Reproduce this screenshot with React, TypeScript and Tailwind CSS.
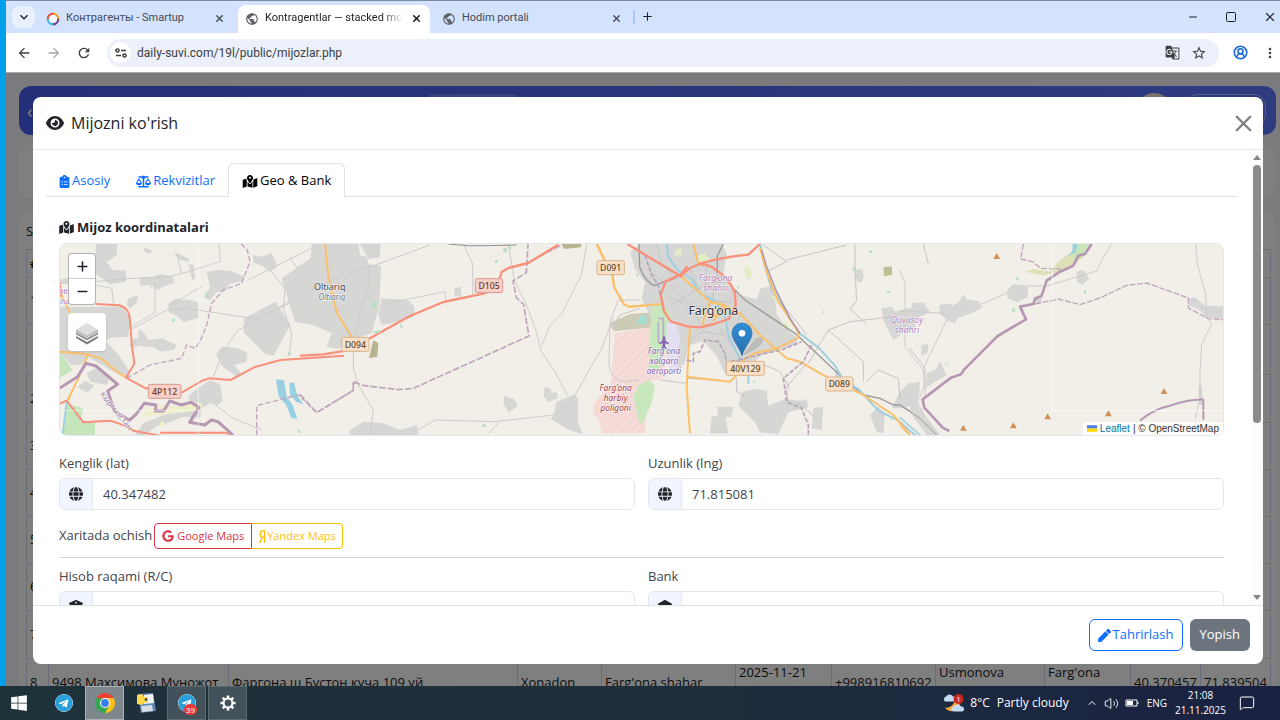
import React, { useState } from 'react';
import {
  FaBuildingColumns,
  FaClipboardList,
  FaEye,
  FaGlobe,
  FaGoogle,
  FaLandmark,
  FaMapLocationDot,
  FaScaleBalanced,
  FaYandex,
} from 'react-icons/fa6';
import { FaPen, FaTelegram, FaWindows } from 'react-icons/fa';
import {
  MdArrowBack,
  MdArrowForward,
  MdGTranslate,
  MdKeyboardArrowDown,
  MdMoreVert,
  MdPublic,
  MdRefresh,
  MdStarBorder,
} from 'react-icons/md';
import { ChevronUp, CircleUserRound, MessageSquare, Minus, Plus, Square, Volume2, X } from 'lucide-react';

const rows = [
  { no: '1', height: 'h-[47px]' },
  { no: '', height: 'h-[50px]' },
  { no: '2', height: 'h-[48px]' },
  { no: '3', height: 'h-[47px]' },
  { no: '4', height: 'h-[47px]' },
  { no: '5', height: 'h-[47px]' },
  { no: '6', height: 'h-[47px]' },
  { no: '7', height: 'h-[48px]' },
];

const lastRow = [
  { text: '8', top: false },
  { text: '9498 Махсимова Муножот', top: false },
  { text: 'Фаргона ш Бустон куча 109 уй', top: false },
  { text: 'Xonadon', top: false },
  { text: "Farg'ona shahar", top: false },
  { text: '2025-11-21', top: true },
  { text: '+998916810692', top: false },
  { text: 'Usmonova', top: true },
  { text: "Farg'ona", top: true },
  { text: '40.370457', top: false },
  { text: '71.839504', top: false },
];

const tabs = [
  { id: 'asosiy', label: 'Asosiy', icon: <FaClipboardList className="w-[11px]" /> },
  { id: 'rekvizitlar', label: 'Rekvizitlar', icon: <FaScaleBalanced className="w-[15px]" /> },
  { id: 'geo', label: 'Geo & Bank', icon: <FaMapLocationDot className="w-4" /> },
];

function RingLogo() {
  return (
    <svg viewBox="0 0 14 14" className="size-[14px]" fill="none" strokeWidth="2.4">
      <path d="M7 1.8A5.2 5.2 0 0 1 12.2 7" stroke="#f0a030" />
      <path d="M12.2 7A5.2 5.2 0 0 1 7 12.2" stroke="#7b3fa0" />
      <path d="M7 12.2A5.2 5.2 0 0 1 1.8 7" stroke="#4ab6e8" />
      <path d="M1.8 7A5.2 5.2 0 0 1 7 1.8" stroke="#e8584a" />
      <circle cx="7" cy="7" r="4" fill="#fff" stroke="none" />
    </svg>
  );
}

function BrowserChrome() {
  return (
    <header className="font-['Roboto','Noto_Sans',sans-serif] text-[#1f1f1f]">
      <div className="flex h-[33px] items-end border-t border-[#7f8ba5] bg-[#d3e3fd] text-[11px]">
        <button aria-label="Search tabs" className="mb-[5px] ml-[6px] flex h-[22px] w-[23px] items-center justify-center rounded-lg bg-[#e9f1fe]">
          <MdKeyboardArrowDown className="size-4" />
        </button>
        <div className="flex h-[28px] w-[203px] items-center rounded-br-xl pb-px pl-[11px] pr-[13px] text-[#454a54]">
          <RingLogo />
          <span className="ml-[6px] flex-1 truncate">Контрагенты - Smartup</span>
          <button aria-label="Close tab"><X className="size-[11px]" strokeWidth={3} /></button>
        </div>
        <div className="flex h-[28px] w-[192px] items-center rounded-t-lg bg-white pb-px pl-[7px] pr-2">
          <MdPublic className="size-[14px] shrink-0 text-[#5f6368]" />
          <span className="ml-[6px] flex-1 overflow-hidden whitespace-nowrap [mask-image:linear-gradient(to_right,black_85%,transparent)]">
            Kontragentlar — stacked moda
          </span>
          <button aria-label="Close tab" className="ml-2"><X className="size-[11px]" strokeWidth={3.5} /></button>
        </div>
        <div className="flex h-[28px] w-[203px] items-center pb-px pl-[12px] pr-[11px] text-[#454a54]">
          <MdPublic className="size-[14px] text-[#5f6368]" />
          <span className="ml-[6px] flex-1">Hodim portali</span>
          <button aria-label="Close tab"><X className="size-[11px]" strokeWidth={3} /></button>
        </div>
        <span className="mb-[9px] h-[14px] w-[2px] rounded bg-[#a8c7fa]" />
        <button aria-label="New tab" className="mb-[10px] ml-[6px]"><Plus className="size-[13px]" /></button>
        <div className="ml-auto flex h-[32px] items-center gap-[26px] pr-[3px]">
          <button aria-label="Minimize"><Minus className="size-[12px]" strokeWidth={2} /></button>
          <button aria-label="Maximize"><Square className="size-[12px]" strokeWidth={2} /></button>
          <button aria-label="Close"><X className="size-[14px]" strokeWidth={2} /></button>
        </div>
      </div>
      <div className="flex h-[40px] items-center border-b border-[#a9abaf] bg-white pl-[10px] pr-[2px]">
        <button aria-label="Back"><MdArrowBack className="size-4 text-[#3c4043]" /></button>
        <button aria-label="Forward" className="ml-[14px]"><MdArrowForward className="size-4 text-[#a5a7aa]" /></button>
        <button aria-label="Reload" className="ml-[14px]"><MdRefresh className="size-4 text-[#3c4043]" /></button>
        <div className="ml-[15px] flex h-[28px] flex-1 items-center rounded-full bg-[#ebf0fa] pl-[3px] pr-[12px]">
          <button aria-label="Site information" className="flex size-[21px] items-center justify-center rounded-full bg-white">
            <svg viewBox="0 0 12 10" className="h-[10px] w-3" fill="none" stroke="#3c4043" strokeWidth="1.5">
              <circle cx="2.5" cy="2.5" r="1.6" />
              <path d="M6 2.5h5M1 7.5h5" />
              <circle cx="9.5" cy="7.5" r="1.6" />
            </svg>
          </button>
          <input
            aria-label="Address"
            readOnly
            value="daily-suvi.com/19l/public/mijozlar.php"
            className="ml-[6px] min-w-0 flex-1 bg-transparent text-[12px] text-[#3c4043] outline-none"
          />
          <button aria-label="Translate"><MdGTranslate className="size-[15px] text-[#3c4043]" /></button>
          <button aria-label="Bookmark" className="ml-[11px]"><MdStarBorder className="size-4 text-[#3c4043]" /></button>
        </div>
        <button aria-label="Profile" className="ml-[14px]"><CircleUserRound className="size-[15px] text-[#1a65e0]" strokeWidth={2.5} /></button>
        <button aria-label="Menu" className="ml-[14px]"><MdMoreVert className="size-4 text-[#3c4043]" /></button>
      </div>
    </header>
  );
}

function ClientsPage() {
  return (
    <div className="h-full overflow-hidden bg-[#f6f7fb] pl-[13px] pr-1 pt-[13px] text-[13px] text-[#15171a]">
      <div className="flex h-[49px] items-center rounded-xl bg-linear-to-r from-[#4660f2] to-[#5c76ff] pl-2 pr-[10px] text-white">
        <span className="text-lg">‹</span>
        <span className="ml-[395px] h-[33px] w-[92px] rounded-md bg-white/20" />
        <span className="ml-auto size-[36px] rounded-full bg-[#efe9e0]" />
        <span className="ml-[14px] h-[33px] w-[80px] rounded-xl border border-white/50" />
      </div>
      <div className="mt-[10px] h-[53px] rounded-xl bg-white" />
      <div className="mt-[13px] rounded-xl bg-white px-[7px]">
        <p className="h-[38px] pt-[10px] leading-5">Soni</p>
        <table className="w-full table-fixed border-collapse whitespace-nowrap">
          <colgroup>
            <col className="w-[22px]" />
            <col className="w-[180px]" />
            <col className="w-[289px]" />
            <col className="w-[84px]" />
            <col className="w-[134px]" />
            <col className="w-[96px]" />
            <col className="w-[104px]" />
            <col className="w-[109px]" />
            <col className="w-[86px]" />
            <col className="w-[70px]" />
            <col className="w-[70px]" />
          </colgroup>
          <thead>
            <tr className="h-[28px]">
              {lastRow.map((_, i) => (
                <th key={i} className="border border-[#d5d9ee] px-[3px] text-left">{i === 0 ? '#' : ''}</th>
              ))}
            </tr>
          </thead>
          <tbody>
            {rows.map((row, r) => (
              <tr key={r} className={row.height}>
                {lastRow.map((_, i) => (
                  <td key={i} className="border border-[#d5d9ee] px-[3px]">{i === 0 ? row.no : ''}</td>
                ))}
              </tr>
            ))}
            <tr className="h-[48px]">
              {lastRow.map((cell) => (
                <td
                  key={cell.text}
                  className={`border border-[#d5d9ee] px-[3px] align-top leading-5 ${cell.top ? 'pt-[3px]' : 'pt-[13px]'}`}
                >
                  {cell.text}
                </td>
              ))}
            </tr>
          </tbody>
        </table>
      </div>
    </div>
  );
}

function RoadSign({ x, y, w, label, primary }: { x: number; y: number; w: number; label: string; primary?: boolean }) {
  return (
    <g>
      <rect
        x={x - w / 2}
        y={y - 21}
        width={w}
        height="42"
        rx="5"
        fill={primary ? '#f6cfc6' : '#f8e0c8'}
        stroke={primary ? '#d99b90' : '#d8b48c'}
        strokeWidth="3"
      />
      <text x={x} y={y + 10} textAnchor="middle" fontSize="26" fontWeight="500" fill={primary ? '#6b3a32' : '#5e4a2c'}>
        {label}
      </text>
    </g>
  );
}

function Peak({ x, y }: { x: number; y: number }) {
  return <path d={`M${x} ${y - 9}l10 18h-20z`} fill="#d08f55" />;
}

// One map unit is a third of a css pixel.
function MapCanvas() {
  return (
    <svg
      viewBox="0 0 3495 573"
      preserveAspectRatio="xMidYMid slice"
      className="h-full w-full bg-[#f2efe9] font-['Noto_Sans',sans-serif]"
      role="img"
      aria-label="Xarita"
      strokeLinejoin="round"
    >
      <defs>
        <pattern id="hatch" width="18" height="18" patternUnits="userSpaceOnUse" patternTransform="rotate(45)">
          <rect width="18" height="18" fill="#f5dcd8" />
          <path d="M0 0v18" stroke="#f3d1cd" strokeWidth="6" />
        </pattern>
        <linearGradient id="pin" x1="0" x2="0" y1="0" y2="1">
          <stop offset="0" stopColor="#2f8fd6" />
          <stop offset="1" stopColor="#2a6fab" />
        </linearGradient>
      </defs>

      {/* west */}
      <g transform="translate(-177 -312)" fill="none">
        <g fill="#d6d6d5">
          <path d="M287 312h65l-2 33-30 22 18 23 40 2v33l-48 8-43-32zM178 420l30-8v20h-30zM178 500h190l22 35-5 55-55 3-12 10 40 45 30 45-3 25-60-32-60-35-25 25-30-3-32-38z" />
          <path d="M420 415l40-5 20-8 40 8 2 20-30 8-18 12-22-15-32 2zM385 475l30-10-5 25-22 15-8-12zM505 492l20-15 50 3 20 8v45l-45 14-18-18-26-12zM388 615l15-22 10 5 5-30 15 10 12 22 40-5 45 20-8 15-40 5-22-13-40-5-25 8z" />
          <path d="M620 395l40-5 35 3 40 18-10 12-38 10-12 20-25 3-20 25-18-10 18-30zM758 345l30 5 25-12 12 20 5 22-20 15-28-20-20-5zM565 372l15 3 5 40-8 5zM520 335l25 10 22 12-2 8-25-5zM430 322l25 8-3 12-18-6z" />
          <path d="M732 535l95-50 44 70-50 92-25-5-65-65zM665 620l50 5 28 15-5 25-35 10 20 25-12 10-45-32-18-35zM565 768l30-25 35-22 30 12 8 50-15 12-25-5-15 12-40-5zM260 700l25-15 45 25-10 25-50-10zM232 740l25-18 25 15-20 22zM430 850l60-25 70-20 45 5-5 25-50-5-50 20-30 8-35 27h-30z" />
        </g>
        <path d="M430 810l60-15 60 5 50-15 10 20-50 10-60 8-70 8zM478 850l12-8 5 15-10 8z" fill="#eeeecb" />
        <path d="M178 635l40 55-40 25zM200 792l50 12-10 40 45 5v36H185z" fill="#c5e6bd" />
        <path d="M828 718l24 2 8 50 18 25 14 42-18-3-16-40-22-25zM868 728h14l10 40 18 25-22-8-18-20z" fill="#98cfe2" />
        <g stroke="#cdcbcc" strokeWidth="3">
          <path d="M285 425l80-8 145-8 60-15 92-30-5-52M465 430v88l-110 65M510 495l95-55M390 570l110-60 60-5 230 35M290 435l45 10 8 60M545 400l-15-60" />
          <path d="M640 710l30-75 40-60 60-40 120-55 60-30M745 420l190-95M810 390l45 55-5 60 25 75-8 70M870 350l25 40" />
          <path d="M640 790l60 45 85 35" />
        </g>
        <path d="M380 715l70-40 95-20 15-40 25 10 15-20 20-50 15-65 35-40 55-20 25-65-8-35-35-35" stroke="#bfa6bc" strokeWidth="4" strokeDasharray="16 7" />
        <path d="M770 885v-88l125-32 55 52 110-65v-25l12 8" stroke="#bfa6bc" strokeWidth="4" strokeDasharray="16 7" />
        <path d="M178 440l8 30 20 40 30 60M178 635l85 8 40 12 50 42 25 15M265 640l-30 75-32 65 8-10" stroke="#fbc069" strokeWidth="6" />
        <path d="M200 780l-12 105" stroke="#98cfe2" strokeWidth="5" />
        <path d="M178 425l6 45M287 492l70 4q30 5 33 45l5 70 8 60-25 42 55 30 30 8M545 758l60-35 22-8 65 5 70-38 80-22 190-13M178 792l22-10 50 65 80-5q50 15 70 30l80 15M480 878h200l8 8" stroke="#f8907a" strokeWidth="6" />
        <path d="M178 745l55-35 25-40 30 8 65 55-30 20 20 60 45 28 20-18 25-33 35 5-2 18h25l18-30 35 12 28-8 25 15-28 45 45 8 20-15 20 5 45 40" stroke="#b698b3" strokeWidth="9" />
        <path d="M595 312v573M178 812h430" stroke="#fff" strokeOpacity=".5" strokeWidth="3" />
        <g fill="#b5dfc1">
          <path d="M617 455l8 8-3 10-6-3zM515 537l10-2v10h-8zM402 605l5-3v10zM948 515l8-6v12zM866 637h6v8h-8zM890 865l12 8-5 10zM450 440l6-2v8z" />
        </g>
      </g>

      {/* Oltiariq and the plain east of it */}
      <g transform="translate(723 -27)" fill="none">
        <g fill="#d6d6d5">
          <path d="M35 27l-3 43-87 60 40 130 55 10 55 25-15 40 35 7 35-27 65-20 23-80 5-122-38-5-5-23-20-5-5-33z" />
          <path d="M180 27h62l-3 40-34 5zM245 190l80 5 18 20-3 30-45 15-50 10-10-30zM462 160l20-5 3 30-20-2zM735 455l15 5 5 15 15-5 3 20-28 12-15-20zM770 500l50-20 15 8-2 70 15 40-45-15-50-30 8-15zM612 482l30 10 12 20-28 20-15-25zM150 585l40-25 60 5 50 20 50-15 5 30H150z" />
        </g>
        <path d="M220 315l15 10-3 40-25 5 8-35zM785 27h60l-3 10-50 5z" fill="#b7b48f" />
        <path d="M928 265l62-28 100-8 0 45-148 15z" fill="#cccbb5" />
        <path d="M945 295l150-25v160l-50 10-10 155H905l-8-40-20-20 5-30 50-60 5-65z" fill="url(#hatch)" />
        <g stroke="#cdcbcc" strokeWidth="3">
          <path d="M-60 215l120-65 120-45 60-20 150-55M205 90l5 40-30 110-20 70v90l15 50 45 75-10 75M105 235l40-30M260 205l175-35 3 25M345 590l60-35 180 5 175-20 60-35M490 27l28 60v95M625 27l18 110 35 70 30 80 15 60 40 60 40 75M860 27l-15 90-60 120-35 35-25 60M565 595l35-35M940 250l-35 90-85 150" />
          <path d="M1020 195h-65l-25 65-3 130q5 45 45 50l45-5" />
        </g>
        <path d="M445 27q60 8 120 5l85-2" stroke="#8f8f8f" strokeWidth="3" />
        <path d="M0 478l50 55 110-67v-28l25 13 110 13 45-4 347-157-8-45-8-50-22-20-10-50 40-25 5-86M780 32l-95 50" stroke="#bfa6bc" strokeWidth="5" strokeDasharray="20 6" />
        <path d="M75 27l10 100 25 105 45 75 10 40M890 27l30 65 18 30 5 35 30 52 15 6 90-8" stroke="#fbc069" strokeWidth="6" />
        <path d="M0 362l70-4 90-15M200 315l130-72 100-42 120-25 40-15 15-50 20-12 60-15 90-55" stroke="#f8907a" strokeWidth="7" />
        <path d="M215 205l15-5-3 20-12 2zM300 262l10 15-8 3zM610 40l10-2v14h-10zM625 32l10 4-5 10zM218 290l20-5 3 10h-20zM585 75h8v8h-8zM548 568h10v8h-10zM45 230l8-5v12z" fill="#b5dfc1" />
      </g>

      {/* Fargona city */}
      <g transform="translate(1593 -27)" fill="none">
        <g fill="#d6d6d5">
          <path d="M150 27h245l15 30-10 60 40 60 55 15 40 55 55 45 30 20v15l-110 35-40 50-65 5-25-55-40-45-45 15-10 50-15 20-30-10-10-110-45-30-30-60 10-50-30-40-15-50z" />
          <path d="M512 160l28-5 15 30 5 55 40 50 25 20-20 20-50-40-65-75zM795 105l22-2 5 25-10 15-12-5zM800 130h8v8zM875 220l30-5 10 15 40-10 50-10 15 20-40 20-5 30-30 10-35 25-15-30-15-30zM455 470l40-8 35 5 5 45 50-20 45 5 20-5 5 25-60 15-30 65-55-5-15-30-50-50zM365 545l40-5 10 55h-55zM380 515h50l-5 30-40 5zM670 520l30-5-5 70-30-5zM905 520l25-50 30-30 15 30-5 40-35 10zM840 540l25-25 20 20-5 60-20-5zM735 405l20 10-5 20-15-5z" />
        </g>
        <path d="M187 213l32-5 20 30 20 45-25 15-8 50-20 60-30-5 3-90zM145 450l30-15 20 15-10 55-30 65-10-15-15-70z" fill="#c9e7bd" />
        <path d="M230 260l25-5 15 50-10 110-20 5-10-60z" fill="#e4dff0" />
        <path d="M255 45l20-5v20l-20 5zM325 60l20-5 15 20-15 10-20-5zM460 100l15-10 12 30-15 15zM545 185l10-5 10 30zM575 265l15-5 8 15-18 5zM335 160l10 5-8 15z" fill="#e2edc5" />
        <path d="M880 97l25-3 2 25-25 5z" fill="#bfbd94" />
        <g stroke="#c6c4c5" strokeWidth="3">
          <path d="M225 180l55 25 45 50 10 20M240 150l60 60 60 10M245 210l50-30 60-35 60-5M300 100l20 50 45 45 60 10M200 27l15 60 40 40M350 95l-5 70M380 130l-20 85M180 110l40 30M390 280l40 60M300 310l40-20 60 10M450 240l-20 60" />
          <path d="M520 30l70 50-60 30 15 60 75 90 30 40M590 75l180-45M795 27v80l5 90-20 25 50 45M715 285l65-25 130-15M715 285l-60 100M715 285l105 95v60M650 385l-60 70 5 60M830 440l35-35 60 25 5 60M960 340l45 60 0 90M1000 27l15 60M290 430l80 5M210 435l80 10M620 500l60 50M500 380l70 30 30 50M440 430l0 40 25 15M150 220l-60 20-25 40" />
        </g>
        <path d="M147 27l2 70q15 40 42 55l70-25M400 27l-18 35v70M435 165l30 30 150 100 60 55 95 90 50 40 50 10 40 20 20 0 40 25 50 40" stroke="#999" strokeWidth="4" />
        <path d="M230 27l5 40 30 40 40 25 25 45 45 20 30 45 10 60 35 70 25 45v30M510 27l15 70 20 60 40 70 40 65 60 45 50 55 25 45 45 25 60 65 60 30 70 60 25 40" stroke="#9ecfdf" strokeWidth="6" />
        <g stroke="#fbc069" strokeWidth="6">
          <path d="M22 27l30 65 15 30 5 35 30 52 15 6 100-8M310 27l15 60M275 125l85 75 40 10 50 25 60 65 80 70 40 10 60 35 60 30 70 35 90 60 50 60" />
          <path d="M510 40l20 70 35 90 40 60 22 35-5 15-60 30-70 15-40 25M360 200l-20 55 0 20M400 208l-30 50M355 240l35 3M360 200l40 10 5 25M300 275l-5 80-5 100 10 140M290 425l130 15 20-20" />
        </g>
        <path d="M112 27l160 97 28-25 30-12q35 3 50 20 35 20 55 65l2 40-15 25-5 15-45 15-40 10-40-3-50-15-20-30-10-50 15-40 45-20 20-25M325 87q70-20 150-28l35-32" stroke="#f8907a" strokeWidth="7" />
        <path d="M165 60l20 60 20 30 5 30M290 375l20 5v-25l20-5 15-35 40 5 20 35 5 30 25-10 35 15M445 375l80-20 50-10 60-25M665 330l-25 50-60 50 10 70 45 20 20 50v40" stroke="#b9a1b8" strokeWidth="5" strokeDasharray="14 5" />
        <path d="M515 45l15 50 30 75 40 80 30 45" stroke="#a58fae" strokeWidth="4" />
        <path d="M150 242l20 0v25h-30z" fill="#a5ded2" />
        <path d="M205 250h15v95M205 260v65" stroke="#b9adc9" strokeWidth="5" />
        <path d="M788 97h10v12h-10zM838 46h8v8h-8zM890 168h10v5h-10zM700 225l6 10h-8zM185 175l8 6-6 4zM138 115l8 5-8 6zM440 150l8 5-4 8zM488 435l8 3-3 8zM900 545l6 5-4 8z" fill="#b5dfc1" />
      </g>

      {/* eastern border */}
      <g transform="translate(2523 -312)" fill="none">
        <g fill="#d6d6d5">
          <path d="M35 488h40v38H38zM118 495l30-5 10 8 20-15 12-20 10 15 35 5 12 20-40 20-35 12-5 15-25-8-22-20zM322 450l18-18 45 5-3 35-30 15-30-12zM530 395l20-5 18 25-20 20-18-10zM80 700l25-10 15-25 20 40-50 30-12 8zM35 730l25-5-5 65 20 35 45 60h-40l-50-70zM65 615l20-3-2 25-20 12zM865 475l20-3 30 25 55 2v38l-50-5-25-25-30-10zM400 470l25-5v20l-15 8zM895 740l10-5 5 60h-12z" />
        </g>
        <path d="M375 395l25-8 50 8 30-35 45-28 50-20-25 40-60 45-60 8z" fill="#dde0b4" />
        <path d="M525 312h50l-25 30-30 20z" fill="#c8e6b8" />
        <path d="M518 312h14l-5 25-25 12 15-15z" fill="#98cfe2" />
        <g stroke="#cdcbcc" strokeWidth="3">
          <path d="M0 390l15 40v190l55 70 3 45-15 40M0 512l130 8M245 492l80-35M385 438h55l100-30 50-15 20-40 25-41M140 540l-70 145M887 312l5 60 25 90 3 70 15 20-30 60-5 80v80l-15 65" />
        </g>
        <path d="M370 312l-8 45 35 8 25 20 60 2M405 492l70-15 65 17 60-20 80-38 60-7 125 45v30l60 32 45 3" stroke="#bfa6bc" strokeWidth="4" strokeDasharray="18 5" />
        <path d="M575 312l-20 30-20 5-15 30-40 18-40 27-15 45-20 10-5 15-40 8 18 38-85 50-50 50-50 50-10 15-30 10-85 65 5 25 55 60 20 10" stroke="#b698b3" strokeWidth="8" />
        <path d="M720 842q40-35 90-45 60-20 100-18v60" stroke="#b698b3" strokeWidth="6" />
        <path d="M457 312v500M457 812h513" stroke="#fff" strokeOpacity=".7" strokeWidth="3" />
        <path d="M0 832l60 53" stroke="#9ecfdf" strokeWidth="5" />
        <path d="M0 855l30 30" stroke="#fbc069" strokeWidth="6" />
        <path d="M0 795l60 40 50 50" stroke="#999" strokeWidth="3" />
        <path d="M335 507l10-2v10h-8zM132 668l10 5v6zM552 450h5v12h-5zM348 412h8v7h-8z" fill="#b5dfc1" />
        <Peak x={290} y={348} />
        <Peak x={792} y={753} />
        <Peak x={625} y={820} />
        <Peak x={443} y={829} />
        <Peak x={340} y={856} />
        <Peak x={190} y={863} />
      </g>

      <g textAnchor="middle" stroke="#ffffff" strokeOpacity=".7" strokeWidth="4" paintOrder="stroke">
        <text x="812" y="138" fontSize="27" fill="#444">Oltiariq</text>
        <text x="819" y="169" fontSize="24" fontStyle="italic" fill="#777">Oltiariq</text>
        <text x="1963" y="214" fontSize="37" fill="#333">Farg'ona</text>
        <g fontSize="26" fontStyle="italic" fill="#b083b8">
          <text x="1970" y="111">Farg'ona</text>
          <text x="1970" y="140">shahri</text>
          <text x="2544" y="238">Quvasoy</text>
          <text x="2544" y="267">shahri</text>
        </g>
        <g fontSize="25" fontStyle="italic" fill="#8461b5">
          <text x="1815" y="331">Farg'ona</text>
          <text x="1815" y="361">xalqaro</text>
          <text x="1815" y="390">aeroporti</text>
        </g>
        <g fontSize="25" fontStyle="italic" fill="#a03a42">
          <text x="1670" y="440">Farg'ona</text>
          <text x="1670" y="470">harbiy</text>
          <text x="1670" y="500">poligoni</text>
        </g>
        <text x="18" y="151" fontSize="22" fill="#a273ad">Olto</text>
        <text x="18" y="181" fontSize="22" fill="#a273ad">shar</text>
        <text fontSize="24" fill="#9b7d9c" transform="translate(166 506) rotate(51)">Кыргызстан</text>
      </g>
      <path d="M1815 272l4 10v8l11 7v4l-11-3-1 9 4 4v3l-7-2-7 2v-3l4-4-1-9-11 3v-4l11-7v-8z" fill="#8461b5" />

      <RoadSign x={317} y={442} w={98} label="4P112" primary />
      <RoadSign x={889} y={301} w={82} label="D094" />
      <RoadSign x={1290} y={125} w={82} label="D105" primary />
      <RoadSign x={1655} y={71} w={82} label="D091" />
      <RoadSign x={2059} y={373} w={114} label="40V129" />
      <RoadSign x={2341} y={420} w={82} label="D089" />

      <path d="M2050 335l38-50q22-12 24 3 0 14-30 32z" fill="#000" opacity=".12" />
      <path d="M2049 335c-8-28-30-46-30-68a30 30 0 0 1 60 0c0 22-22 40-30 68z" fill="url(#pin)" stroke="#2567a0" strokeWidth="2" />
      <circle cx="2049" cy="268" r="10" fill="#fff" />
    </svg>
  );
}

function LayersIcon() {
  return (
    <svg viewBox="0 0 26 26" className="size-[26px]">
      <path d="M2 17l11 6 11-6v2l-11 6.500-11-6.500z" fill="#7c7c7c" />
      <path d="M2 13l11 6 11-6v2.500l-11 6-11-6z" fill="#999" />
      <path d="M13 4l11 6.500-11 6-11-6z" fill="#dedede" />
      <path d="M2 10.500l11 6 11-6v2l-11 6-11-6z" fill="#b5b5b5" />
    </svg>
  );
}

function ClientMap() {
  return (
    <div className="relative h-[193px] overflow-hidden rounded-lg border border-[#e3e6ea]">
      <MapCanvas />
      <div className="absolute left-2 top-[9px] w-[28px] overflow-hidden rounded border border-black/30 bg-white">
        <button aria-label="Zoom in" className="flex h-[25px] w-full items-center justify-center border-b border-[#ccc]">
          <Plus className="size-[15px]" strokeWidth={2.5} />
        </button>
        <button aria-label="Zoom out" className="flex h-[25px] w-full items-center justify-center">
          <Minus className="size-[15px]" strokeWidth={2.5} />
        </button>
      </div>
      <button aria-label="Layers" className="absolute left-2 top-[69px] flex size-[38px] items-center justify-center rounded bg-white shadow">
        <LayersIcon />
      </button>
      <div className="absolute bottom-0 right-0 flex items-center bg-white/80 px-1 font-['Liberation_Sans',sans-serif] text-[10px] leading-[13px] text-[#333]">
        <svg viewBox="0 0 12 8" className="mr-[3px] h-[7px] w-[10px]">
          <path fill="#4c7be1" d="M0 0h12v4H0z" />
          <path fill="#ffd500" d="M0 4h12v4H0z" />
        </svg>
        <a href="#leaflet" className="mr-[3px] text-[#0078a8]">Leaflet</a>
        <span>| © OpenStreetMap</span>
      </div>
    </div>
  );
}

function Field({ id, label, value, icon }: { id: string; label: string; value: string; icon: React.ReactNode }) {
  return (
    <div>
      <label htmlFor={id} className="block leading-5 text-[#3f454b]">{label}</label>
      <div className="mt-[5px] flex h-[32px] overflow-hidden rounded-md border border-[#e3e6ea]">
        <span className="flex w-[33px] items-center justify-center border-r border-[#e3e6ea] bg-[#f1f5ff] text-[14px] text-[#212529]">
          {icon}
        </span>
        <input id={id} readOnly defaultValue={value} className="min-w-0 flex-1 px-[10px] pt-px text-[#3f454b] outline-none" />
      </div>
    </div>
  );
}

function ClientModal() {
  const [active, setActive] = useState('geo');

  return (
    <div role="dialog" aria-labelledby="modal-title" className="flex min-h-0 flex-1 flex-col overflow-hidden rounded-lg bg-white text-[13px] text-[#212529]">
      <div className="flex h-[53px] shrink-0 items-center border-b border-[#e9ebee] px-[13px]">
        <FaEye className="size-[18px]" />
        <h5 id="modal-title" className="ml-[7px] text-[16px] font-medium">Mijozni ko'rish</h5>
        <button aria-label="Close" className="-mr-[7px] ml-auto text-[#7f7f7f]"><X className="size-[27px]" strokeWidth={2} /></button>
      </div>

      <div className="flex min-h-0 flex-1">
        <div className="min-w-0 flex-1 overflow-hidden px-[13px] pt-[13px]">
          <div role="tablist" className="flex h-[34px] border-b border-[#dee2e6]">
            {tabs.map((tab) => (
              <button
                key={tab.id}
                role="tab"
                aria-selected={tab.id === active}
                onClick={() => setActive(tab.id)}
                className={
                  tab.id === active
                    ? 'flex h-[34px] items-center gap-[2px] rounded-t-md border border-b-0 border-[#dee2e6] bg-white px-[13px] pt-px text-black'
                    : 'flex h-[34px] items-center gap-[2px] border border-b-0 border-transparent px-[12px] pt-px text-[#0d6efd]'
                }
              >
                {tab.icon}
                {tab.label}
              </button>
            ))}
          </div>

          <div className="px-[13px] pt-5">
            <h6 className="flex items-center gap-[3px] font-bold leading-5">
              <FaMapLocationDot className="w-[15px]" />
              Mijoz koordinatalari
            </h6>
            <div className="mt-[6px]">
              <ClientMap />
            </div>

            <div className="mt-[17px] grid grid-cols-2 gap-x-[13px]">
              <Field id="lat" label="Kenglik (lat)" value="40.347482" icon={<FaGlobe />} />
              <Field id="lng" label="Uzunlik (lng)" value="71.815081" icon={<FaGlobe />} />
            </div>

            <div className="mt-[13px] flex items-center gap-[2px]">
              <span className="text-[#3f454b]">Xaritada ochish</span>
              <div className="flex text-[11px]">
                <a href="#google" className="flex h-[26px] items-center gap-[3px] rounded-l border border-[#dc3545] px-[7px] text-[#dc3545]">
                  <FaGoogle className="size-[12px]" />
                  Google Maps
                </a>
                <a href="#yandex" className="flex h-[26px] items-center gap-px rounded-r border border-l-0 border-[#ffc107] px-[6px] text-[#ffc107]">
                  <FaYandex className="h-[13px] w-2" />
                  Yandex Maps
                </a>
              </div>
            </div>

            <hr className="mb-2 mt-2 border-[#d3d5d7]" />

            <div className="grid grid-cols-2 gap-x-[13px]">
              <Field id="account" label="Hisob raqami (R/C)" value="" icon={<FaBuildingColumns />} />
              <Field id="bank" label="Bank" value="" icon={<FaLandmark />} />
            </div>
          </div>
        </div>

        <div className="flex w-[13px] flex-col items-center bg-[#fcfcfc] py-[5px]">
          <span className="border-x-4 border-b-[5px] border-x-transparent border-b-[#868686]" />
          <span className="mt-[5px] h-[258px] w-2 rounded-full bg-[#8b8b8b]" />
          <span className="mt-auto border-x-4 border-t-[5px] border-x-transparent border-t-[#868686]" />
        </div>
      </div>

      <div className="flex h-[59px] shrink-0 items-center justify-end gap-[7px] border-t border-[#dee2e6] px-[13px]">
        <button className="flex h-[32px] items-center gap-[2px] rounded-md border border-[#0d6efd] px-2 text-[#0d6efd]">
          <FaPen />
          Tahrirlash
        </button>
        <button className="h-[32px] rounded-md bg-[#6c757d] px-[10px] text-white">Yopish</button>
      </div>
    </div>
  );
}

function ChromeLogo() {
  return (
    <svg viewBox="0 0 20 20" className="size-5">
      <path d="M10 10L1.340 5A10 10 0 0 1 18.660 5z" fill="#ea4335" />
      <path d="M10 10l8.660-5A10 10 0 0 1 10 20z" fill="#fbc116" />
      <path d="M10 10v10A10 10 0 0 1 1.340 5z" fill="#34a853" />
      <path d="M10 5h8.660l-4.400 7.500z" fill="#fbc116" />
      <path d="M14.300 12.500L10 20 7 13z" fill="#34a853" />
      <path d="M5.700 12.500L1.340 5 8 5.500z" fill="#34a853" />
      <circle cx="10" cy="10" r="5" fill="#fff" />
      <circle cx="10" cy="10" r="3.900" fill="#3b7ded" />
    </svg>
  );
}

function DiskKeyIcon() {
  return (
    <svg viewBox="0 0 20 20" className="size-5">
      <path d="M2 1l15-1 3 18-15 2z" fill="#5c86b4" />
      <path d="M8 2l9-1 1 9-10 1z" fill="#f4f4f0" />
      <path d="M5 13l11-1 1 6-11 1z" fill="#d7dde3" />
      <path d="M1 2l5-1 2 3h4v5l-4 1-2 2-5-1z" fill="#ffd84a" />
      <circle cx="10" cy="6.500" r="1.300" fill="#333" />
    </svg>
  );
}

function GearIcon() {
  return (
    <svg viewBox="0 0 16 16" className="size-4" fill="none" stroke="#fff">
      <circle cx="8" cy="8" r="4.400" strokeWidth="2" />
      <path
        d="M8 .5v3M8 12.500v3M.5 8h3M12.500 8h3M2.700 2.700l2.100 2.100M11.200 11.200l2.100 2.100M2.700 13.300l2.100-2.100M11.200 4.800l2.100-2.100"
        strokeWidth="2.600"
      />
    </svg>
  );
}

function WeatherIcon() {
  return (
    <svg viewBox="0 0 21 20" className="size-[21px]">
      <path d="M13 3a8 8 0 1 1-11 11c6 1 10-4 11-11z" fill="#f5a63b" />
      <path d="M2 8a3 3 0 0 1 1-5 4 4 0 0 1 7 0 2.500 2.500 0 0 1 1 5z" fill="#c5dcf7" />
      <path d="M11 18a2.500 2.500 0 0 1 0-5 4 4 0 0 1 7 0 2.500 2.500 0 0 1 1 5z" fill="#c5dcf7" />
      <circle cx="15.500" cy="5.500" r="5" fill="#c8281f" />
      <text x="15.500" y="8.300" fontSize="8" textAnchor="middle" fill="#fff">1</text>
    </svg>
  );
}

function Taskbar() {
  const slot = 'flex h-[34px] w-[39px] items-center justify-center';

  return (
    <footer className="flex h-[34px] shrink-0 items-center bg-linear-to-r from-[#1e323a] via-[#1e2f3b] to-[#1a2142] text-[12px] text-white">
      <div className="flex gap-[2px]">
        <button aria-label="Start" className="flex h-[34px] w-[42px] items-center justify-center pr-1">
          <FaWindows className="size-[18px]" />
        </button>
        <button aria-label="Telegram" className={slot}>
          <FaTelegram className="size-[18px] rounded-full bg-white text-[#2b9fd9]" />
        </button>
        <button aria-label="Chrome" className={`${slot} border border-[#a9b1b4] bg-[#7e888c]`}><ChromeLogo /></button>
        <button aria-label="WinSCP" className={slot}><DiskKeyIcon /></button>
        <button aria-label="Telegram chats" className={`${slot} relative border border-[#5d6b70] bg-[#43525a]`}>
          <FaTelegram className="size-[18px] rounded-full bg-white text-[#2b9fd9]" />
          <span className="absolute bottom-1 right-2 rounded-full bg-[#e53b3b] px-[2px] text-[8px] leading-[11px]">39</span>
        </button>
        <button aria-label="Settings" className={`${slot} border border-[#5d6b70] bg-[#43525a]`}>
          <GearIcon />
        </button>
      </div>
      <div className="ml-auto flex items-center pr-[25px]">
        <WeatherIcon />
        <span className="ml-[6px]">8°C</span>
        <span className="ml-[7px]">Partly cloudy</span>
        <ChevronUp className="ml-[17px] size-3" strokeWidth={2} />
        <Volume2 className="ml-[6px] size-[15px]" strokeWidth={1.5} />
        <svg viewBox="0 0 14 8" className="ml-[6px] h-2 w-[14px]">
          <path d="M1 1h11v6H1z" fill="none" stroke="#fff" />
          <path d="M2 2h6v4H2zM12.500 3h1v2h-1z" fill="#fff" />
        </svg>
        <span className="ml-2 text-[10px]">ENG</span>
        <time className="ml-[8px] text-center text-[10px] leading-[15px]">
          21:08
          <br />
          21.11.2025
        </time>
        <MessageSquare className="ml-[13px] size-[16px]" strokeWidth={1.5} />
      </div>
    </footer>
  );
}

function App() {
  return (
    <div className="flex h-screen flex-col overflow-hidden bg-[#00a0ea] font-['Open_Sans','Noto_Sans',sans-serif]">
      <div className="flex min-h-0 flex-1">
        <div className="w-[6px] shrink-0" />
        <div className="flex min-w-0 flex-1 flex-col">
          <BrowserChrome />
          <main className="relative min-h-0 flex-1">
            <ClientsPage />
            <div className="absolute inset-0 flex bg-black/50 pb-[22px] pl-[27px] pr-[17px] pt-6">
              <ClientModal />
            </div>
          </main>
        </div>
      </div>
      <Taskbar />
    </div>
  );
}

export default App;
